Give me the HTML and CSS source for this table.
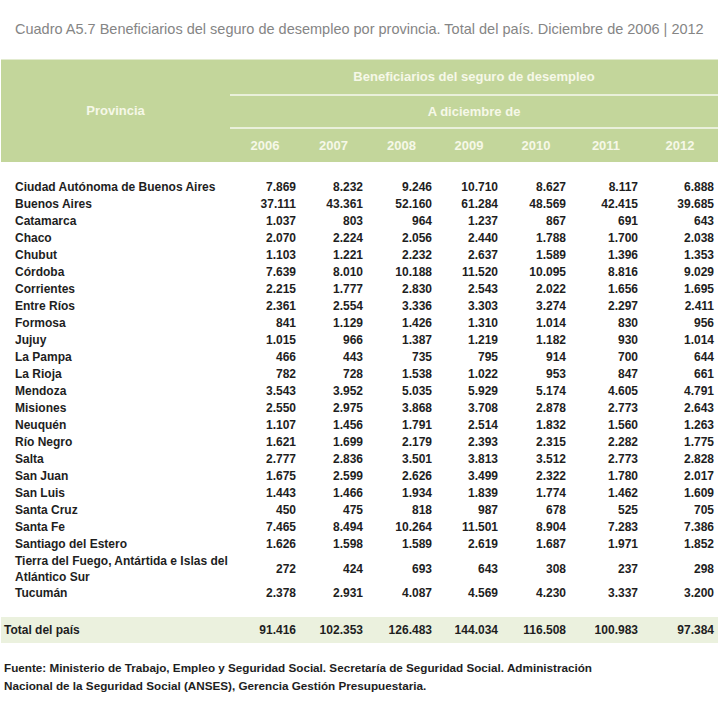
FILE: index.html
```html
<!DOCTYPE html>
<html lang="es">
<head>
<meta charset="utf-8">
<title>Cuadro A5.7</title>
<link rel="stylesheet" href="styles.css">
</head>
<body>
<div class="page">
  <h1 class="title">Cuadro A5.7 Beneficiarios del seguro de desempleo por provincia. Total del país. Diciembre de 2006 | 2012</h1>
  <table class="data">
    <colgroup>
      <col class="c-prov">
      <col class="c-a"><col class="c-b"><col class="c-c"><col class="c-d"><col class="c-e"><col class="c-f"><col class="c-g">
    </colgroup>
    <thead>
      <tr class="h1">
        <th rowspan="3" class="prov-h">Provincia</th>
        <th colspan="7" class="line">Beneficiarios del seguro de desempleo</th>
      </tr>
      <tr class="h2">
        <th colspan="7" class="line">A diciembre de</th>
      </tr>
      <tr class="h3">
        <th>2006</th><th>2007</th><th>2008</th><th>2009</th><th>2010</th><th>2011</th><th>2012</th>
      </tr>
    </thead>
    <tbody>
      <tr class="spacer"><td colspan="8"></td></tr>
      <tr><td>Ciudad Autónoma de Buenos Aires</td><td>7.869</td><td>8.232</td><td>9.246</td><td>10.710</td><td>8.627</td><td>8.117</td><td>6.888</td></tr>
      <tr><td>Buenos Aires</td><td>37.111</td><td>43.361</td><td>52.160</td><td>61.284</td><td>48.569</td><td>42.415</td><td>39.685</td></tr>
      <tr><td>Catamarca</td><td>1.037</td><td>803</td><td>964</td><td>1.237</td><td>867</td><td>691</td><td>643</td></tr>
      <tr><td>Chaco</td><td>2.070</td><td>2.224</td><td>2.056</td><td>2.440</td><td>1.788</td><td>1.700</td><td>2.038</td></tr>
      <tr><td>Chubut</td><td>1.103</td><td>1.221</td><td>2.232</td><td>2.637</td><td>1.589</td><td>1.396</td><td>1.353</td></tr>
      <tr><td>Córdoba</td><td>7.639</td><td>8.010</td><td>10.188</td><td>11.520</td><td>10.095</td><td>8.816</td><td>9.029</td></tr>
      <tr><td>Corrientes</td><td>2.215</td><td>1.777</td><td>2.830</td><td>2.543</td><td>2.022</td><td>1.656</td><td>1.695</td></tr>
      <tr><td>Entre Ríos</td><td>2.361</td><td>2.554</td><td>3.336</td><td>3.303</td><td>3.274</td><td>2.297</td><td>2.411</td></tr>
      <tr><td>Formosa</td><td>841</td><td>1.129</td><td>1.426</td><td>1.310</td><td>1.014</td><td>830</td><td>956</td></tr>
      <tr><td>Jujuy</td><td>1.015</td><td>966</td><td>1.387</td><td>1.219</td><td>1.182</td><td>930</td><td>1.014</td></tr>
      <tr><td>La Pampa</td><td>466</td><td>443</td><td>735</td><td>795</td><td>914</td><td>700</td><td>644</td></tr>
      <tr><td>La Rioja</td><td>782</td><td>728</td><td>1.538</td><td>1.022</td><td>953</td><td>847</td><td>661</td></tr>
      <tr><td>Mendoza</td><td>3.543</td><td>3.952</td><td>5.035</td><td>5.929</td><td>5.174</td><td>4.605</td><td>4.791</td></tr>
      <tr><td>Misiones</td><td>2.550</td><td>2.975</td><td>3.868</td><td>3.708</td><td>2.878</td><td>2.773</td><td>2.643</td></tr>
      <tr><td>Neuquén</td><td>1.107</td><td>1.456</td><td>1.791</td><td>2.514</td><td>1.832</td><td>1.560</td><td>1.263</td></tr>
      <tr><td>Río Negro</td><td>1.621</td><td>1.699</td><td>2.179</td><td>2.393</td><td>2.315</td><td>2.282</td><td>1.775</td></tr>
      <tr><td>Salta</td><td>2.777</td><td>2.836</td><td>3.501</td><td>3.813</td><td>3.512</td><td>2.773</td><td>2.828</td></tr>
      <tr><td>San Juan</td><td>1.675</td><td>2.599</td><td>2.626</td><td>3.499</td><td>2.322</td><td>1.780</td><td>2.017</td></tr>
      <tr><td>San Luis</td><td>1.443</td><td>1.466</td><td>1.934</td><td>1.839</td><td>1.774</td><td>1.462</td><td>1.609</td></tr>
      <tr><td>Santa Cruz</td><td>450</td><td>475</td><td>818</td><td>987</td><td>678</td><td>525</td><td>705</td></tr>
      <tr><td>Santa Fe</td><td>7.465</td><td>8.494</td><td>10.264</td><td>11.501</td><td>8.904</td><td>7.283</td><td>7.386</td></tr>
      <tr><td>Santiago del Estero</td><td>1.626</td><td>1.598</td><td>1.589</td><td>2.619</td><td>1.687</td><td>1.971</td><td>1.852</td></tr>
      <tr class="tall"><td>Tierra del Fuego, Antártida e Islas del<br>Atlántico Sur</td><td>272</td><td>424</td><td>693</td><td>643</td><td>308</td><td>237</td><td>298</td></tr>
      <tr><td>Tucumán</td><td>2.378</td><td>2.931</td><td>4.087</td><td>4.569</td><td>4.230</td><td>3.337</td><td>3.200</td></tr>
      <tr class="spacer2"><td colspan="8"></td></tr>
      <tr class="total"><td>Total del país</td><td>91.416</td><td>102.353</td><td>126.483</td><td>144.034</td><td>116.508</td><td>100.983</td><td>97.384</td></tr>
    </tbody>
  </table>
  <p class="source">Fuente: Ministerio de Trabajo, Empleo y Seguridad Social. Secretaría de Seguridad Social. Administración<br>Nacional de la Seguridad Social (ANSES), Gerencia Gestión Presupuestaria.</p>
</div>
</body>
</html>
```

FILE: styles.css
```css
html, body {
  margin: 0;
  padding: 0;
  background: #ffffff;
}

.page {
  font-family: "Liberation Sans", Arial, sans-serif;
  color: #1e1e1e;
  padding-top: 21px;
}

.title {
  margin: 0 0 0 15px;
  font-size: 14.5px;
  line-height: 17px;
  font-weight: normal;
  color: #858585;
  white-space: nowrap;
}

.data {
  margin: 21px 0 0 1px;
  width: 717px;
  border-collapse: collapse;
  table-layout: fixed;
  font-size: 12px;
  font-weight: bold;
}

.c-prov { width: 229px; }
.c-a { width: 70px; }
.c-b { width: 67px; }
.c-c { width: 69px; }
.c-d { width: 66px; }
.c-e { width: 68px; }
.c-f { width: 72px; }
.c-g { width: 76px; }

.data thead th {
  background: #c3d69b;
  color: #f6f8e8;
  font-size: 13px;
  font-weight: bold;
  text-align: center;
  padding: 0;
  line-height: 16px;
}

.data thead tr.h1 th {
  border-top: 1px solid #e2ebcf;
}

.data thead tr.h1 th.line { height: 34px; }
.data thead tr.h2 th.line { height: 31px; }
.data thead tr.h3 th { height: 33px; }

.data thead th.line {
  border-bottom: 2px solid #e9f0da;
}

.data thead th.prov-h {
  border-bottom: none;
}

.data tbody td {
  padding: 0 4px 0 0;
  height: 17px;
  line-height: 17px;
  text-align: right;
  white-space: nowrap;
}

.data tbody td:first-child {
  text-align: left;
  padding-left: 14px;
}

.data tbody tr.spacer td { height: 17px; }
.data tbody tr.spacer2 td { height: 15px; }

.data tbody tr.tall td {
  height: 32px;
  line-height: 16px;
}

.data tbody tr.total td {
  background: #ebf1de;
  height: 26px;
}

.data tbody tr.total td:first-child {
  padding-left: 3px;
}

.source {
  margin: 16px 0 0 4px;
  font-size: 11.7px;
  line-height: 18px;
  font-weight: bold;
  color: #1e1e1e;
}
```
